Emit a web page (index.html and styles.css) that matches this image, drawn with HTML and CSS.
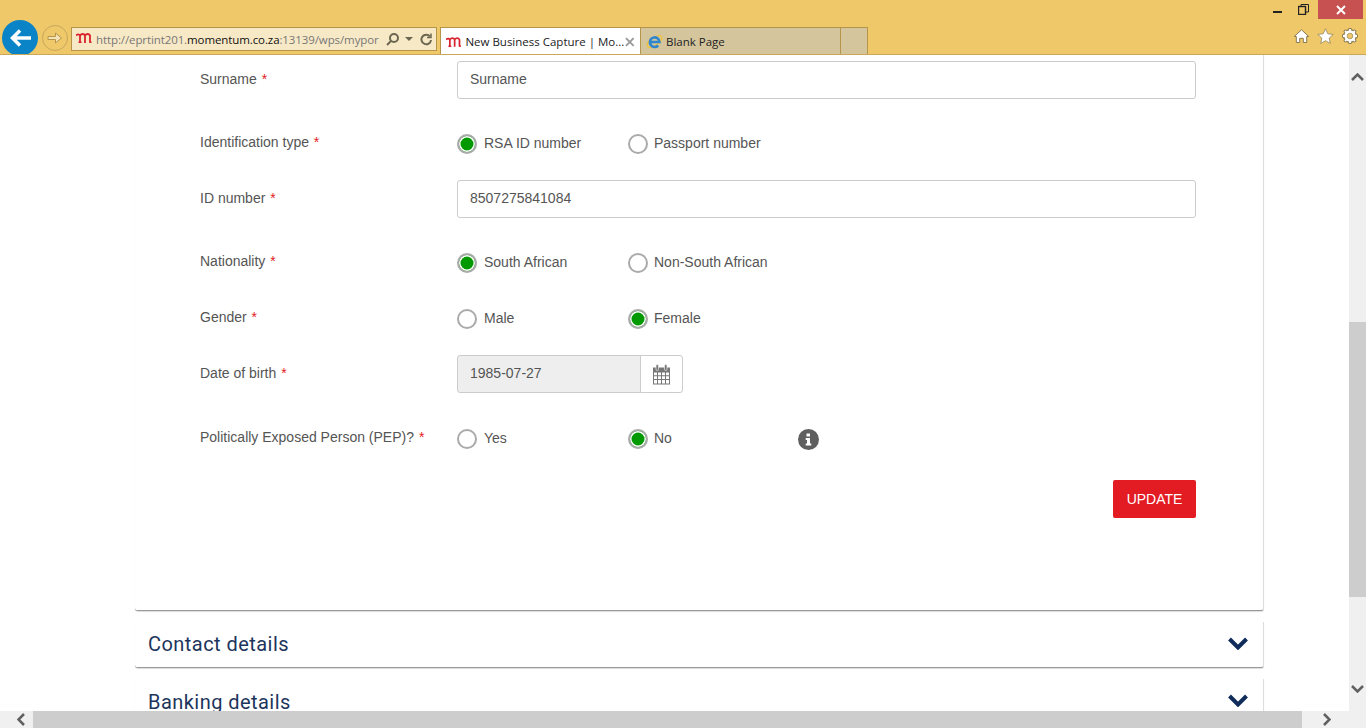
FILE: index.html
```html
<!DOCTYPE html>
<html lang="en">

<head>
    <meta charset="UTF-8">
    <title>New Business Capture | Momentum</title>
    <link rel="stylesheet" href="styles.css">
</head>

<body>
    <header class="browser">
        <div class="window-buttons">
            <span class="win-btn win-min">
                <svg width="10" height="3" viewBox="0 0 10 3"><rect width="9" height="2" y="1" fill="#222"/></svg>
            </span>
            <span class="win-btn">
                <svg width="11" height="11" viewBox="0 0 11 11" fill="none" stroke="#222"><rect x="0.5" y="2.5" width="7" height="8" stroke-width="1.4"/><path d="M3 2.5V.5h7.5v7.5H8"/></svg>
            </span>
            <span class="win-close">
                <svg width="10" height="10" viewBox="0 0 10 10" stroke="#fff" stroke-width="2"><path d="M1 1l8 8M9 1l-8 8"/></svg>
            </span>
        </div>
        <div class="nav-row">
            <span class="back-btn">
                <svg width="21" height="18" viewBox="0 0 21 18" fill="none" stroke="#fff" stroke-width="3.500"><path d="M21 9H3M10 1.500L2.500 9l7.500 7.500"/></svg>
            </span>
            <span class="forward-btn">
                <svg width="16" height="14" viewBox="0 0 16 14" fill="#f5e2b4" stroke="#b5954a"><path d="M1 5.500h7.500V2L14.500 7l-6 5V8.500H1z"/></svg>
            </span>
            <div class="address-bar">
                <svg class="logo" width="16" height="10" viewBox="0 0 16 10" fill="none" stroke="#d9232e" stroke-width="1.800"><path d="M0 2.500c1.500-1.500 3-1.500 4 0V10M2.500 9.500h3M4 2.500c1.500-2 4-2 5 0V10M9 2.500c1.500-2 4-2 5 0v6.500l1.500.5"/></svg>
                <span class="url">http://eprtint201.<b>momentum.co.za</b>:13139/wps/mypor</span>
                <svg width="13" height="13" viewBox="0 0 13 13" fill="none" stroke="#6b6650" stroke-width="2"><circle cx="8" cy="5" r="4"/><path d="M5 8l-4 4"/></svg>
                <svg class="drop" width="8" height="4" viewBox="0 0 8 4"><path d="M0 0h8L4 4z" fill="#6b6650"/></svg>
                <svg width="12" height="13" viewBox="0 0 12 13" fill="none" stroke="#6b6650" stroke-width="2"><path d="M10 3.500A4.800 4.800 0 1 0 11 7"/><path d="M11 .5v4H7" stroke-width="1.500"/></svg>
            </div>
            <div class="tab tab-active">
                <svg width="16" height="10" viewBox="0 0 16 10" fill="none" stroke="#d9232e" stroke-width="1.800"><path d="M0 2.500c1.500-1.500 3-1.500 4 0V10M2.500 9.500h3M4 2.500c1.500-2 4-2 5 0V10M9 2.500c1.500-2 4-2 5 0v6.500l1.500.5"/></svg>
                <span class="tab-title">New Business Capture | Mo...</span>
                <svg width="10" height="10" viewBox="0 0 10 10" stroke="#999" stroke-width="2"><path d="M1 1l8 8M9 1l-8 8"/></svg>
            </div>
            <div class="tab tab-blank">
                <svg width="17" height="17" viewBox="0 0 17 17" fill="none"><ellipse cx="8.500" cy="8.500" rx="8.500" ry="4" transform="rotate(-35 8.500 8.500)" stroke="#f2c230" stroke-width="1.200"/><path d="M4.500 9h9a4.800 4.800 0 1 0-1.300 3.500" stroke="#2f86cf" stroke-width="2.600"/></svg>
                <span class="tab-title">Blank Page</span>
            </div>
            <div class="tab tab-new"></div>
            <div class="tools">
                <svg width="15" height="14" viewBox="0 0 15 14"><path d="M7.500 .8L14.800 7.500H12.700V13.500H9.300V9.300H5.700V13.500H2.300V7.500H.2z" fill="#fff" stroke="#8a7a50"/></svg>
                <svg width="17" height="16" viewBox="0 0 17 16"><path d="M8.500.8l2.300 5 5.400.6-4 3.700 1.100 5.300-4.800-2.700-4.800 2.700 1.100-5.300-4-3.700 5.400-.6z" fill="#fff" stroke="#8a7a50" stroke-width="0.700"/></svg>
                <svg width="16" height="16" viewBox="0 0 16 16" fill="none"><circle cx="8" cy="8" r="5" stroke="#8a7a50" stroke-width="4"/><path d="M8 0v16M0 8h16M2.300 2.300l11.400 11.400M13.700 2.300L2.300 13.700" stroke="#8a7a50" stroke-width="3"/><path d="M8 1v14M1 8h14M3 3l10 10M13 3L3 13" stroke="#fff" stroke-width="1.800"/><circle cx="8" cy="8" r="4.500" stroke="#fff" stroke-width="2.400"/><circle cx="8" cy="8" r="2.800" fill="#efc86a" stroke="#8a7a50" stroke-width="0.600"/></svg>
            </div>
        </div>
    </header>

    <div class="viewport">
        <main class="page">
            <section class="panel panel-form">
                <div class="row row-input">
                    <label class="field-label">Surname <em>*</em></label>
                    <input class="text-input" type="text" value="Surname">
                </div>
                <div class="row">
                    <label class="field-label">Identification type <em>*</em></label>
                    <label class="radio"><input type="radio" name="idtype" checked>RSA ID number</label>
                    <label class="radio"><input type="radio" name="idtype">Passport number</label>
                </div>
                <div class="row row-input">
                    <label class="field-label">ID number <em>*</em></label>
                    <input class="text-input" type="text" value="8507275841084">
                </div>
                <div class="row">
                    <label class="field-label">Nationality <em>*</em></label>
                    <label class="radio"><input type="radio" name="nat" checked>South African</label>
                    <label class="radio"><input type="radio" name="nat">Non-South African</label>
                </div>
                <div class="row">
                    <label class="field-label">Gender <em>*</em></label>
                    <label class="radio"><input type="radio" name="gender">Male</label>
                    <label class="radio"><input type="radio" name="gender" checked>Female</label>
                </div>
                <div class="row row-input row-date">
                    <label class="field-label">Date of birth <em>*</em></label>
                    <div class="date-group">
                        <input class="date-input" type="text" value="1985-07-27" disabled>
                        <span class="date-btn">
                            <svg width="19" height="21" viewBox="0 0 19 21"><path d="M1 3.500h17v17H1z" fill="#777"/><path d="M2 8.500h3v2.700H2zM6 8.500h3v2.700H6zM10 8.500h3v2.700h-3zM14 8.500h3v2.700h-3zM2 12.200h3v2.700H2zM6 12.200h3v2.700H6zM10 12.200h3v2.700h-3zM14 12.200h3v2.700h-3zM2 15.900h3v3.600H2zM6 15.900h3v3.600H6zM10 15.900h3v3.600h-3zM14 15.900h3v3.600h-3z" fill="#fff"/><rect x="4" y="0.500" width="2.500" height="6" rx="1.200" fill="#777" stroke="#fff" stroke-width="0.600"/><rect x="12.500" y="0.500" width="2.500" height="6" rx="1.200" fill="#777" stroke="#fff" stroke-width="0.600"/></svg>
                        </span>
                    </div>
                </div>
                <div class="row row-pep">
                    <label class="field-label">Politically Exposed Person (PEP)? <em>*</em></label>
                    <label class="radio"><input type="radio" name="pep">Yes</label>
                    <label class="radio"><input type="radio" name="pep" checked>No</label>
                    <svg class="info" width="21" height="21" viewBox="0 0 21 21"><circle cx="10.500" cy="10.500" r="10.500" fill="#5f5f5f"/><path d="M8.500 4.500h3.500v3h-3.500zM7.700 9h4.300v5.500h1.300v2H7.700v-2H9V11H7.700z" fill="#fff"/></svg>
                </div>
                <div class="actions">
                    <button class="btn-update">UPDATE</button>
                </div>
            </section>
            <section class="panel panel-collapsed">
                <h2>Contact details</h2>
                <svg width="20" height="13" viewBox="0 0 20 13" fill="none" stroke="#0f2c5a" stroke-width="4"><path d="M1.500 2l8.500 8.500L18.500 2"/></svg>
            </section>
            <section class="panel panel-collapsed">
                <h2>Banking details</h2>
                <svg width="20" height="13" viewBox="0 0 20 13" fill="none" stroke="#0f2c5a" stroke-width="4"><path d="M1.500 2l8.500 8.500L18.500 2"/></svg>
            </section>
        </main>
        <div class="vscroll">
            <svg class="arrow-up" width="13" height="8" viewBox="0 0 13 8" fill="none" stroke="#606060" stroke-width="2.500"><path d="M1 7l5.500-5.500L12 7"/></svg>
            <div class="vthumb"></div>
            <svg class="arrow-down" width="13" height="8" viewBox="0 0 13 8" fill="none" stroke="#606060" stroke-width="2.500"><path d="M1 1l5.500 5.500L12 1"/></svg>
        </div>
    </div>
    <div class="hscroll">
        <svg class="arrow-left" width="8" height="13" viewBox="0 0 8 13" fill="none" stroke="#606060" stroke-width="2.500"><path d="M7 1L1.500 6.500 7 12"/></svg>
        <div class="hthumb"></div>
        <svg class="arrow-right" width="8" height="13" viewBox="0 0 8 13" fill="none" stroke="#606060" stroke-width="2.500"><path d="M1 1l5.500 5.500L1 12"/></svg>
    </div>
</body>

</html>
```

FILE: styles.css
```css
* {
    box-sizing: border-box;
}

html, body {
    margin: 0;
    height: 728px;
    overflow: hidden;
}

body {
    display: flex;
    flex-direction: column;
    font-family: "Liberation Sans", Arial, sans-serif;
    font-size: 14px;
    color: #555;
    background: #fff;
}

/* browser chrome */
.browser {
    height: 55px;
    flex: none;
    background: #efc86a;
    border-bottom: 1px solid #c9a85a;
    overflow: hidden;
}

.window-buttons {
    height: 19px;
    display: flex;
    justify-content: flex-end;
    align-items: center;
    padding-right: 3px;
}

.win-btn {
    width: 30px;
    display: flex;
    justify-content: center;
}

.win-min {
    padding: 4px 0 0 9px;
}

.win-close {
    width: 45px;
    height: 19px;
    background: #c75050;
    display: flex;
    justify-content: center;
    align-items: center;
}

.nav-row {
    display: flex;
    align-items: flex-start;
    height: 35px;
    padding: 2px 0 0 2px;
    font-family: "Open Sans", sans-serif;
    font-size: 11.5px;
}

.back-btn {
    width: 36px;
    height: 36px;
    flex: none;
    margin-top: -1px;
    border-radius: 50%;
    background: #0a84c6;
    display: flex;
    justify-content: center;
    align-items: center;
}

.forward-btn {
    width: 26px;
    height: 26px;
    flex: none;
    margin: 4px 3px 0 4px;
    border-radius: 50%;
    border: 1px solid #c9a75c;
    display: flex;
    justify-content: center;
    align-items: center;
}

.address-bar {
    width: 366px;
    height: 24px;
    flex: none;
    margin-top: 6px;
    padding: 0 4px;
    display: flex;
    align-items: center;
    background: #f8e9c6;
    border: 1px solid #b5954a;
}

.address-bar .logo {
    flex: none;
    margin: 0 4px 2px 0;
}

.url {
    width: 285px;
    flex: none;
    margin-right: 5px;
    letter-spacing: -0.1px;
    white-space: nowrap;
    overflow: hidden;
    color: #777;
}

.url b {
    font-weight: 400;
    color: #111;
}

.drop {
    margin: 0 7px 0 6px;
    flex: none;
}

.tab {
    height: 28px;
    flex: none;
    margin-top: 6px;
    display: flex;
    align-items: center;
    border: 1px solid #b5954a;
    border-bottom: none;
    color: #222;
}

.tab-active {
    width: 201px;
    margin-left: 3px;
    padding: 0 5px;
    background: #fff;
}

.tab-active .tab-title {
    width: 157px;
    margin-left: 4px;
    margin-right: 3px;
    white-space: nowrap;
}

.tab-blank {
    width: 200px;
    padding: 0 5px;
    border-left: none;
    background: #d5c59d;
}

.tab-blank .tab-title {
    margin-left: 3px;
}

.tab-new {
    width: 27px;
    border-left: none;
    background: #d5c59d;
}

.tools {
    margin-left: auto;
    display: flex;
    align-items: center;
    gap: 8px;
    padding: 7px 8px 0 0;
}

/* page */
.viewport {
    flex: 1;
    min-height: 0;
    display: flex;
}

.page {
    flex: 1;
    min-width: 0;
    overflow: hidden;
    padding-left: 135px;
}

.panel {
    width: 1129px;
    background: #fff;
    border-right: 1px solid #ddd;
    border-bottom: 1px solid #999;
    border-radius: 0 0 3px 3px;
    box-shadow: 0 1px 1px #ddd;
}

.panel-form {
    height: 556px;
    padding: 6px 67px 0 65px;
}

.row {
    height: 38px;
    margin-bottom: 18px;
    display: flex;
    align-items: center;
}

.row-input {
    margin-bottom: 25px;
}

.row-date {
    margin-bottom: 26px;
}

.row-pep {
    margin-bottom: 23px;
}

.field-label {
    width: 257px;
    flex: none;
    padding-bottom: 2px;
}

.field-label em {
    font-style: normal;
    color: #e31b23;
    margin-left: 1px;
}

.text-input {
    flex: 1;
    height: 38px;
    padding: 0 12px 2px;
    border: 1px solid #ccc;
    border-radius: 3px;
    font: inherit;
    color: #555;
}

.radio {
    width: 171px;
    flex: none;
    display: flex;
    align-items: center;
    gap: 7px;
}

.radio + .radio {
    gap: 6px;
}

.radio input {
    appearance: none;
    width: 20px;
    height: 20px;
    margin: 2px 0 0;
    border: 2px solid #aaa;
    border-radius: 50%;
    background: #fff;
}

.radio input:checked {
    background: #090;
    box-shadow: inset 0 0 0 1.5px #fff;
}

.info {
    margin: 2px 0 0 -1px;
}

.date-group {
    display: flex;
    width: 226px;
    height: 38px;
}

.date-input {
    width: 184px;
    padding: 0 12px 2px;
    border: 1px solid #ccc;
    border-radius: 3px 0 0 3px;
    background: #eee;
    font: inherit;
    color: #555;
}

.date-btn {
    width: 43px;
    margin-left: -1px;
    display: flex;
    justify-content: center;
    align-items: center;
    border: 1px solid #ccc;
    border-radius: 0 3px 3px 0;
    background: #fff;
}

.actions {
    display: flex;
    justify-content: flex-end;
}

.btn-update {
    width: 83px;
    height: 38px;
    border: none;
    border-radius: 2px;
    background: #e31b23;
    color: #fff;
    font: inherit;
}

.panel-collapsed {
    height: 46px;
    margin-top: 11px;
    padding: 0 15px 0 13px;
    display: flex;
    justify-content: space-between;
    align-items: center;
}

.panel-collapsed h2 {
    margin: 0 0 2px;
    font-family: Roboto, sans-serif;
    font-size: 20px;
    font-weight: 400;
    letter-spacing: 0.45px;
    color: #1d355c;
}

.panel-collapsed + .panel-collapsed h2 {
    margin-bottom: 0;
}

.panel-collapsed svg {
    margin-bottom: 2px;
}

/* scrollbars */
.vscroll {
    width: 17px;
    flex: none;
    position: relative;
    background: #f0f0f0;
}

.vthumb {
    position: absolute;
    top: 267px;
    left: 0;
    width: 17px;
    height: 275px;
    background: #cdcdcd;
}

.arrow-up {
    position: absolute;
    top: 18px;
    left: 2px;
}

.arrow-down {
    position: absolute;
    top: 630px;
    left: 2px;
}

.hscroll {
    height: 17px;
    flex: none;
    display: flex;
    align-items: center;
    background: #f0f0f0;
}

.arrow-left {
    margin-left: 17px;
}

.hthumb {
    width: 1269px;
    height: 17px;
    margin-left: 8px;
    background: #cdcdcd;
}

.arrow-right {
    margin-left: 21px;
}
```
